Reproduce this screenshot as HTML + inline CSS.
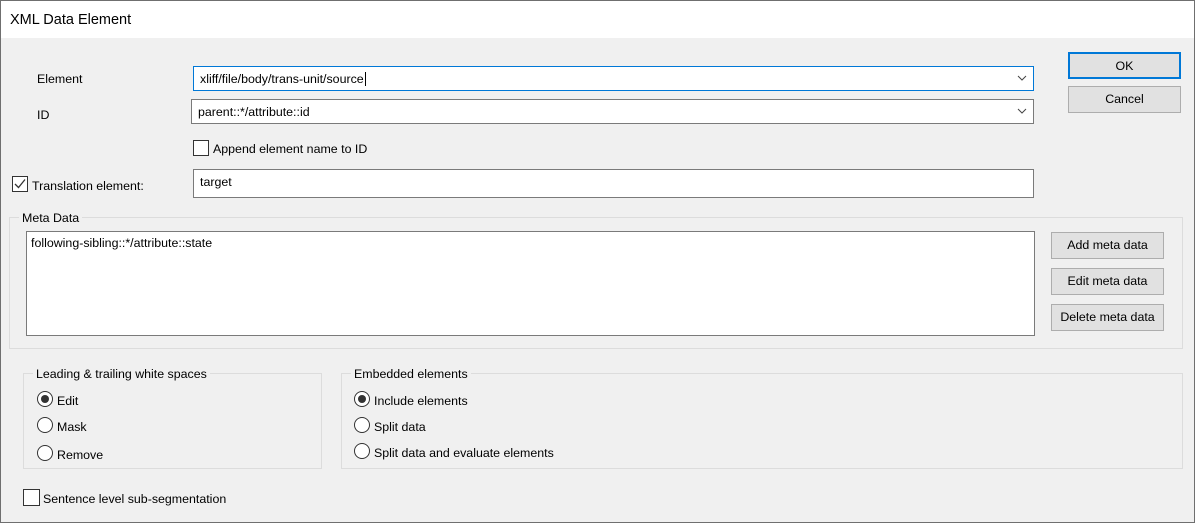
<!DOCTYPE html><html><head><style>
body{margin:0;width:1195px;height:523px;overflow:hidden;font-family:"Liberation Sans",sans-serif;font-size:12.4px;color:#000;position:relative;background:#f0f0f0}
.frame{position:absolute;left:0;top:0;width:1195px;height:523px;border:1px solid #6f6f6f;box-sizing:border-box;z-index:5}
.title{position:absolute;left:0;top:0;width:1195px;height:38px;background:#fff;font-size:14.5px;line-height:40px;padding-left:10px;box-sizing:border-box}
.a{position:absolute;white-space:nowrap;margin-top:1px}
.box{position:absolute;background:#fff;border:1px solid #7a7a7a;box-sizing:border-box;padding-left:6px;padding-top:1px;line-height:22px}
.btn{position:absolute;background:#e1e1e1;border:1px solid #adadad;box-sizing:border-box;text-align:center;line-height:25px}
.cb{position:absolute;width:15px;height:15px;border:1px solid #333;background:#fff;box-sizing:border-box}
.rd{position:absolute;width:15px;height:15px;border:1px solid #333;border-radius:50%;background:#fff;box-sizing:border-box}
.rd.on::after{content:"";position:absolute;left:2.5px;top:2.5px;width:8px;height:8px;border-radius:50%;background:#333}
.grp{position:absolute;border:1px solid #dcdcdc;box-sizing:border-box}
.gl{position:absolute;background:#f0f0f0;padding:0 3px;top:-7px;left:9px}
.chev{position:absolute;right:6px;top:6px}
</style></head><body>
<div class="title">XML Data Element</div>
<div class="a" style="left:37px;top:71px">Element</div>
<div class="box" style="left:193px;top:66px;width:841px;height:25px;border-color:#0078d7">xliff/file/body/trans-unit/source<span style="border-left:1px solid #000;margin-left:1px"></span><svg class="chev" width="10" height="10"><path d="M1 3l4 4 4-4" stroke="#444" fill="none"/></svg></div>
<div class="a" style="left:37px;top:107px">ID</div>
<div class="box" style="left:191px;top:99px;width:843px;height:25px">parent::*/attribute::id<svg class="chev" width="10" height="10"><path d="M1 3l4 4 4-4" stroke="#444" fill="none"/></svg></div>
<div class="cb" style="left:193px;top:140px;width:16px;height:16px"></div>
<div class="a" style="left:213px;top:141px">Append element name to ID</div>
<div class="cb" style="left:12px;top:176px;width:16px;height:16px"><svg width="14" height="14" style="position:absolute;left:0;top:0"><path d="M2 7l3.5 3.5 6.5-8" stroke="#333" stroke-width="1.3" fill="none"/></svg></div>
<div class="a" style="left:32px;top:178px">Translation element:</div>
<div class="box" style="left:193px;top:169px;width:841px;height:29px;line-height:22px">target</div>
<div class="grp" style="left:9px;top:217px;width:1174px;height:132px"><div class="gl">Meta Data</div></div>
<div class="box" style="left:26px;top:231px;width:1009px;height:105px;padding-left:4px;line-height:20px">following-sibling::*/attribute::state</div>
<div class="btn" style="left:1051px;top:232px;width:113px;height:27px">Add meta data</div>
<div class="btn" style="left:1051px;top:268px;width:113px;height:27px">Edit meta data</div>
<div class="btn" style="left:1051px;top:304px;width:113px;height:27px">Delete meta data</div>
<div class="btn" style="left:1068px;top:52px;width:113px;height:27px;border:2px solid #0078d7;line-height:24px">OK</div>
<div class="btn" style="left:1068px;top:86px;width:113px;height:27px">Cancel</div>
<div class="grp" style="left:23px;top:373px;width:299px;height:96px"><div class="gl">Leading &amp; trailing white spaces</div></div>
<div class="rd on" style="left:37px;top:391px;width:16px;height:16px"></div><div class="a" style="left:57px;top:393px">Edit</div>
<div class="rd" style="left:37px;top:417px;width:16px;height:16px"></div><div class="a" style="left:57px;top:419px">Mask</div>
<div class="rd" style="left:37px;top:445px;width:16px;height:16px"></div><div class="a" style="left:57px;top:447px">Remove</div>
<div class="grp" style="left:341px;top:373px;width:842px;height:96px"><div class="gl">Embedded elements</div></div>
<div class="rd on" style="left:354px;top:391px;width:16px;height:16px"></div><div class="a" style="left:374px;top:393px">Include elements</div>
<div class="rd" style="left:354px;top:417px;width:16px;height:16px"></div><div class="a" style="left:374px;top:419px">Split data</div>
<div class="rd" style="left:354px;top:443px;width:16px;height:16px"></div><div class="a" style="left:374px;top:445px">Split data and evaluate elements</div>
<div class="cb" style="left:23px;top:489px;width:17px;height:17px"></div>
<div class="a" style="left:43px;top:491px">Sentence level sub-segmentation</div>
<div class="frame"></div>
</body></html>
